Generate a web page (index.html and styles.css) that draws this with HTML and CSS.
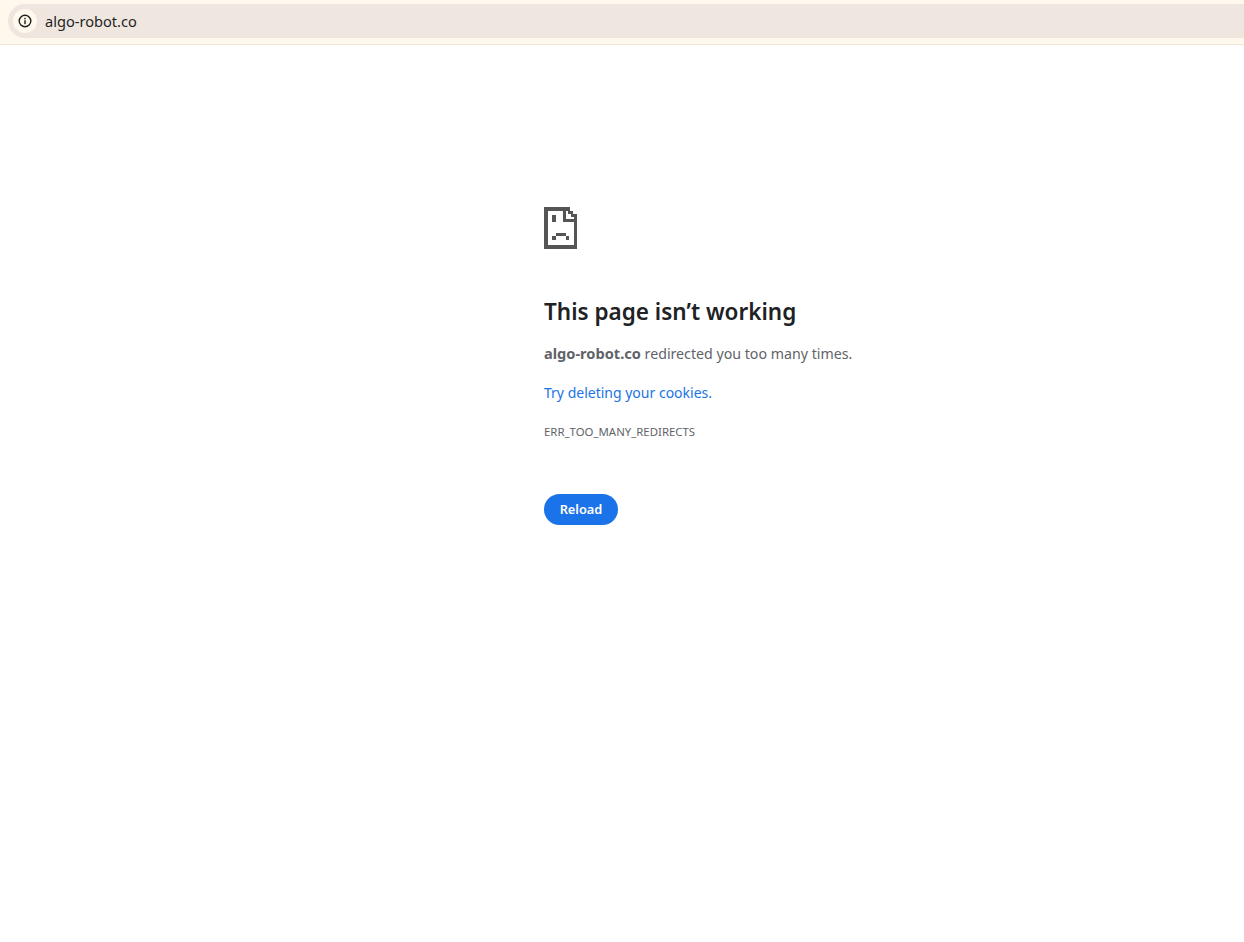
FILE: index.html
```html
<!DOCTYPE html>
<html lang="en">

<head>
    <meta charset="UTF-8">
    <meta name="viewport" content="width=device-width, initial-scale=1.0">
    <title>algo-robot.co</title>
    <link rel="stylesheet" href="styles.css">
</head>

<body>
    <header class="toolbar">
        <div class="omnibox">
            <span class="site-chip">
                <svg class="info-icon" width="14" height="14" viewBox="0 0 14 14">
                    <circle cx="7" cy="7" r="5.8" fill="none" stroke="#1f1f1f" stroke-width="1.4" />
                    <rect x="6.3" y="6.2" width="1.4" height="4" fill="#1f1f1f" />
                    <rect x="6.3" y="3.8" width="1.4" height="1.5" fill="#1f1f1f" />
                </svg>
            </span>
            <span class="url">algo-robot.co</span>
        </div>
    </header>

    <main class="error-page">
        <svg class="sad-page" width="33" height="42" viewBox="0 0 33 42" shape-rendering="crispEdges">
            <path fill="#555" fill-rule="evenodd"
                d="M0 0H26V4H29V7H33V42H0ZM4 4V38H30V15H19V4ZM22 4V12H30V10H27V7H24V4ZM8 8H12V15H8ZM12 26H22V29H12ZM8 29H12V33H8ZM22 29H25V33H22Z" />
        </svg>
        <h1 class="title">This page isn’t working</h1>
        <p class="summary"><strong class="domain">algo-robot.co</strong> redirected you too many times.</p>
        <p class="suggestion"><a href="#">Try deleting your cookies</a>.</p>
        <div class="error-code">ERR_TOO_MANY_REDIRECTS</div>
        <button class="reload" type="button">Reload</button>
    </main>
</body>

</html>
```

FILE: styles.css
```css
* {
    margin: 0;
    padding: 0;
    box-sizing: border-box;
}

body {
    background: #fff;
    font-family: "Noto Sans", "Open Sans", sans-serif;
}

.toolbar {
    height: 45px;
    padding: 4px 0 6px 8px;
    background: #fff8ec;
    border-bottom: 1px solid #f0e8d4;
}

.omnibox {
    height: 34px;
    display: flex;
    align-items: center;
    padding-left: 5px;
    background: #efe6df;
    border-radius: 17px 0 0 17px;
}

.site-chip {
    width: 24px;
    height: 24px;
    display: flex;
    align-items: center;
    justify-content: center;
    background: #fff8ec;
    border-radius: 50%;
}

.url {
    margin-left: 8px;
    padding-bottom: 1px;
    font-size: 14.6px;
    color: #1f1f1f;
}

.error-page {
    width: 600px;
    margin-left: 544px;
    padding-top: 162px;
}

.sad-page {
    display: block;
}

.title {
    margin-top: 47px;
    font-size: 22.5px;
    line-height: 32px;
    font-weight: 600;
    color: #202124;
}

.summary,
.suggestion {
    font-size: 14.2px;
    line-height: 20px;
    color: #5f6368;
}

.summary {
    margin-top: 15px;
}

.domain {
    font-size: 14.6px;
}

.suggestion {
    margin-top: 19px;
    font-size: 14px;
    color: #1a73e8;
}

.suggestion a {
    color: #1a73e8;
    text-decoration: none;
}

.error-code {
    margin-top: 21px;
    font-size: 11.4px;
    line-height: 16px;
    color: #5f6368;
}

.reload {
    display: block;
    width: 74px;
    height: 31px;
    margin-top: 54px;
    padding-bottom: 1px;
    border: none;
    border-radius: 16px;
    background: #1a73e8;
    color: #fff;
    font-family: inherit;
    font-size: 12.8px;
    font-weight: 600;
}
```
